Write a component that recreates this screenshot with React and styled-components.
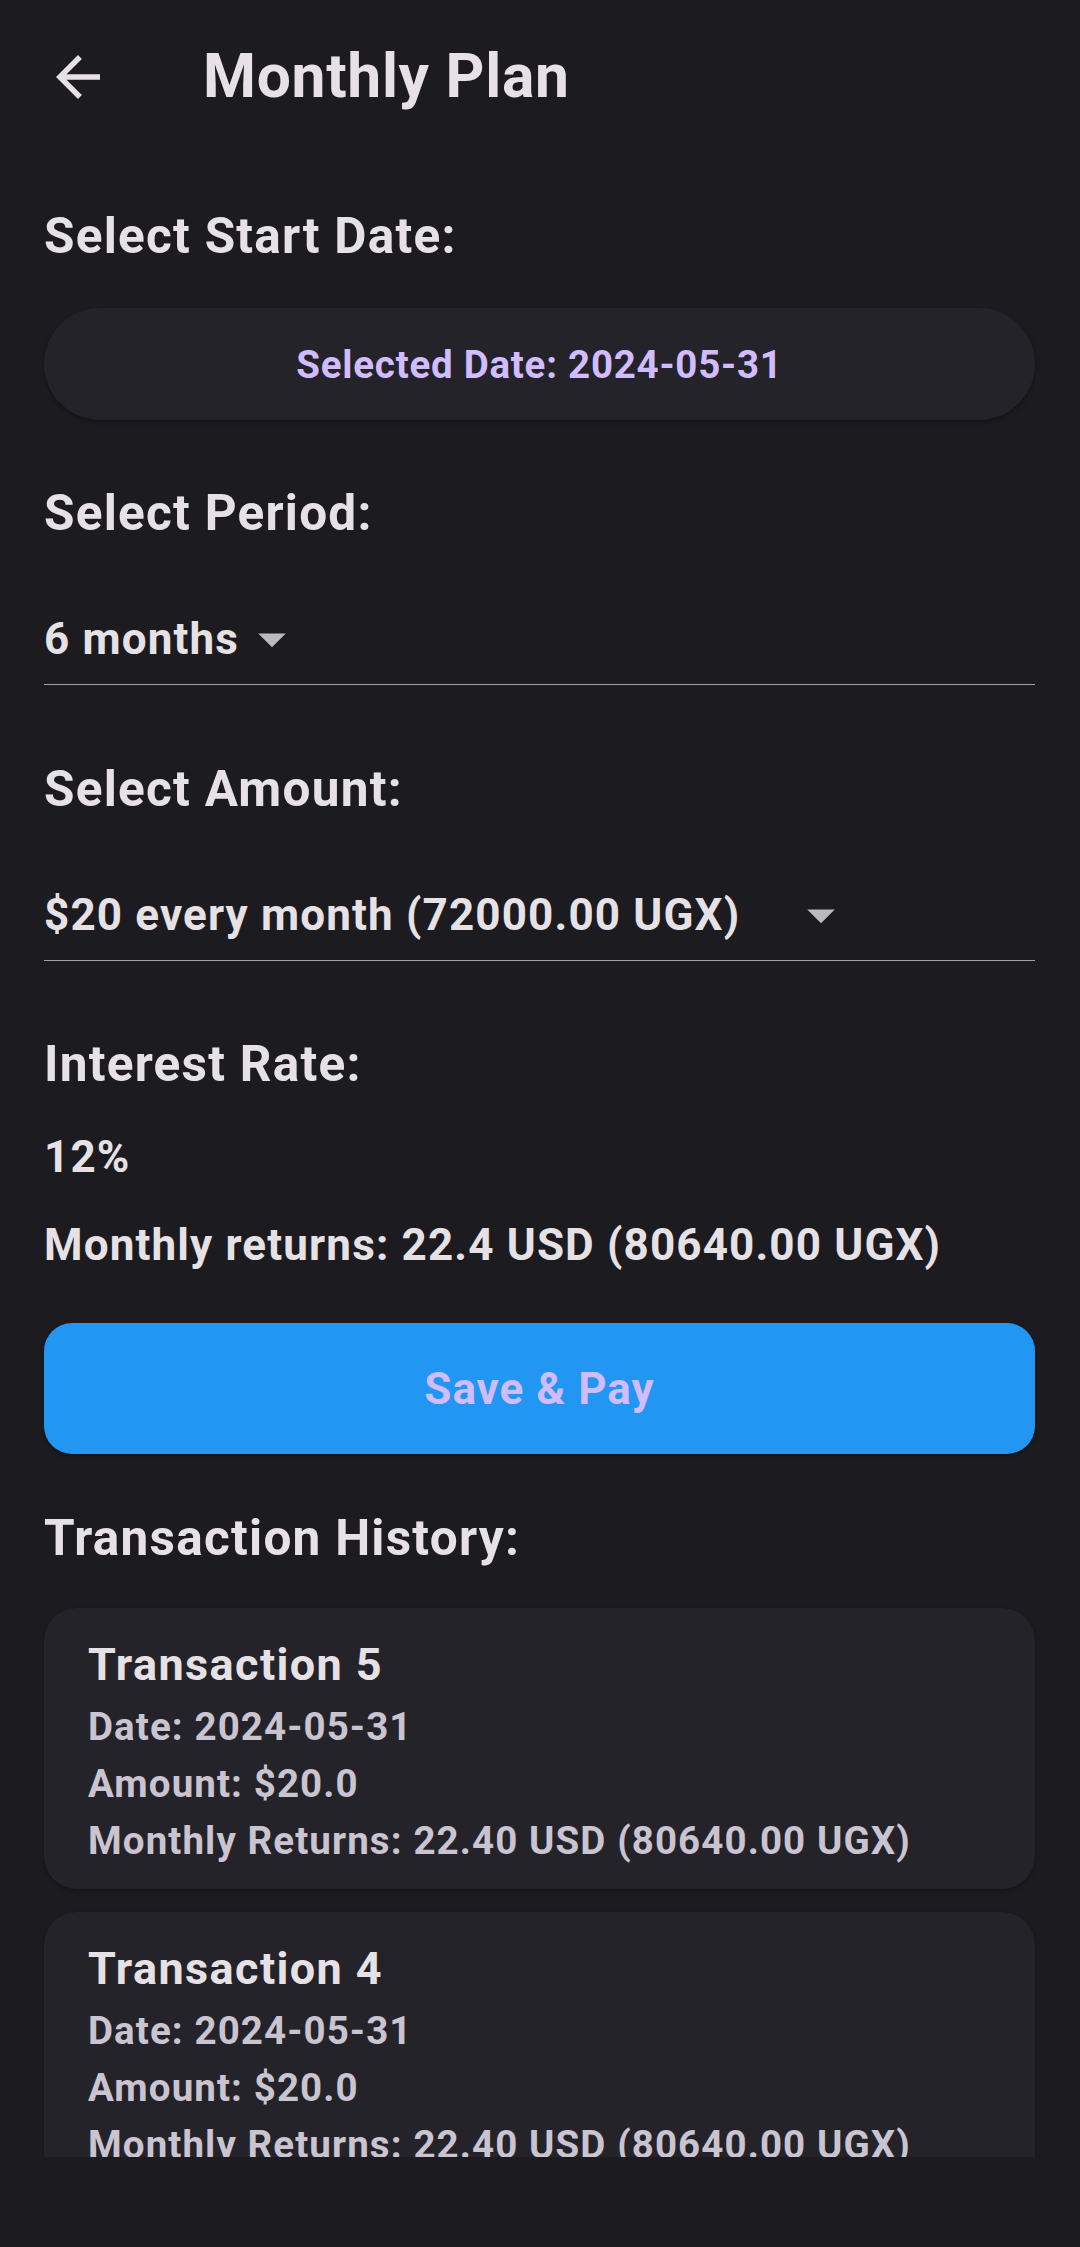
import React from "react";
import styled, { createGlobalStyle } from "styled-components";

const GlobalStyle = createGlobalStyle`
  html, body {
    margin: 0;
    padding: 0;
    background: #1c1b1f;
  }
  body {
    font-family: Roboto, "Noto Sans", "Liberation Sans", sans-serif;
    color: #e6e1e5;
    -webkit-font-smoothing: antialiased;
  }
  * { box-sizing: border-box; }
`;

const Screen = styled.div`
  width: 1080px;
  height: 2247px;
  display: flex;
  flex-direction: column;
  background: #1c1b1f;
  overflow: hidden;
`;

const AppBar = styled.header`
  height: 154px;
  flex: 0 0 154px;
  display: flex;
  align-items: center;
`;

const BackButton = styled.button`
  width: 156px;
  height: 154px;
  display: flex;
  align-items: center;
  justify-content: center;
  background: none;
  border: none;
  padding: 0;
  color: #e6e1e5;
`;

const Title = styled.h1`
  margin: 0 0 0 47px;
  font-size: 60.5px;
  line-height: 154px;
  font-weight: 700;
  letter-spacing: 0.7px;
  color: #e6e1e5;
`;

const ScrollArea = styled.main`
  flex: 0 0 2003px;
  height: 2003px;
  overflow: hidden;
  padding: 0 45px 0 44px;
`;

const BottomInset = styled.div`
  flex: 1 1 auto;
  background: #1c1b1f;
`;

const SectionLabel = styled.h2`
  margin: ${(p) => p.$mt}px 0 0;
  font-size: 49.5px;
  line-height: 58px;
  font-weight: 700;
  letter-spacing: 1.25px;
  color: #e6e1e5;
`;

const DatePill = styled.button`
  display: block;
  width: 100%;
  height: 112px;
  margin-top: 43px;
  border: none;
  border-radius: 56px;
  background: #25232a;
  box-shadow: 0 2px 4px rgba(0, 0, 0, 0.35);
  color: #d0bcff;
  font-family: inherit;
  font-size: 38.5px;
  font-weight: 700;
  letter-spacing: 0.75px;
  text-align: center;
`;

const DropdownRow = styled.div`
  display: flex;
  align-items: center;
  height: 91px;
  margin-top: 52px;
  border-bottom: 1px solid #a3a3a3;
`;

const DropdownValue = styled.span`
  display: inline-block;
  min-width: ${(p) => p.$minWidth || 0}px;
  font-size: 44px;
  line-height: 52px;
  font-weight: 700;
  letter-spacing: 1.15px;
  color: #e6e1e5;
  white-space: nowrap;
`;

const DropIcon = styled.svg`
  width: 66px;
  height: 66px;
  flex: 0 0 66px;
`;

const InfoText = styled.p`
  margin: ${(p) => p.$mt}px 0 0;
  font-size: 44px;
  line-height: 52px;
  font-weight: 700;
  letter-spacing: 1.15px;
  color: #e6e1e5;
`;

const PayButton = styled.button`
  display: block;
  width: 100%;
  height: 131px;
  margin-top: 52px;
  border: none;
  border-radius: 28px;
  background: #2196f3;
  box-shadow: 0 2px 4px rgba(0, 0, 0, 0.35);
  color: #d0bcff;
  font-family: inherit;
  font-size: 44px;
  font-weight: 700;
  letter-spacing: 1px;
`;

const CardList = styled.div`
  display: flex;
  flex-direction: column;
  gap: 23px;
  margin-top: 41px;
`;

const TxCard = styled.article`
  background: #25232a;
  border-radius: 33px;
  padding: 31px 44px 20px;
  box-shadow: 0 2px 4px rgba(0, 0, 0, 0.3);
`;

const TxTitle = styled.h3`
  margin: 0;
  font-size: 45px;
  line-height: 52px;
  font-weight: 700;
  letter-spacing: 1.4px;
  color: #e6e1e5;
`;

const TxLine = styled.p`
  margin: 0;
  font-size: 38.5px;
  line-height: 57px;
  font-weight: 700;
  letter-spacing: 1.1px;
  color: #cac4d0;
  &:first-of-type { margin-top: 7px; }
`;

const ArrowBack = () => (
  <svg width="66" height="66" viewBox="0 0 24 24" fill="#e6e1e5">
    <path d="M20 11H7.83l5.59-5.59L12 4l-8 8 8 8 1.41-1.41L7.83 13H20v-2z" />
  </svg>
);

const Caret = () => (
  <DropIcon viewBox="0 0 24 24">
    <path d="M7 10l5 5 5-5z" fill="rgba(255,255,255,0.7)" />
  </DropIcon>
);

const transactions = [5, 4, 3, 2, 1].map((n) => ({
  id: n,
  date: "2024-05-31",
  amount: "$20.0",
  returns: "22.40 USD (80640.00 UGX)",
}));

export default function App() {
  return (
    <>
      <GlobalStyle />
      <Screen>
        <AppBar>
          <BackButton aria-label="Back">
            <ArrowBack />
          </BackButton>
          <Title>Monthly Plan</Title>
        </AppBar>
        <ScrollArea>
          <SectionLabel $mt={53}>Select Start Date:</SectionLabel>
          <DatePill>Selected Date: 2024-05-31</DatePill>

          <SectionLabel $mt={64}>Select Period:</SectionLabel>
          <DropdownRow>
            <DropdownValue>6 months</DropdownValue>
            <Caret />
          </DropdownRow>

          <SectionLabel $mt={75}>Select Amount:</SectionLabel>
          <DropdownRow>
            <DropdownValue $minWidth={744}>$20 every month (72000.00 UGX)</DropdownValue>
            <Caret />
          </DropdownRow>

          <SectionLabel $mt={74}>Interest Rate:</SectionLabel>
          <InfoText $mt={38}>12%</InfoText>
          <InfoText $mt={36}>Monthly returns: 22.4 USD (80640.00 UGX)</InfoText>

          <PayButton>Save &amp; Pay</PayButton>

          <SectionLabel $mt={55}>Transaction History:</SectionLabel>
          <CardList>
            {transactions.map((t) => (
              <TxCard key={t.id}>
                <TxTitle>Transaction {t.id}</TxTitle>
                <TxLine>Date: {t.date}</TxLine>
                <TxLine>Amount: {t.amount}</TxLine>
                <TxLine>Monthly Returns: {t.returns}</TxLine>
              </TxCard>
            ))}
          </CardList>
        </ScrollArea>
        <BottomInset />
      </Screen>
    </>
  );
}
